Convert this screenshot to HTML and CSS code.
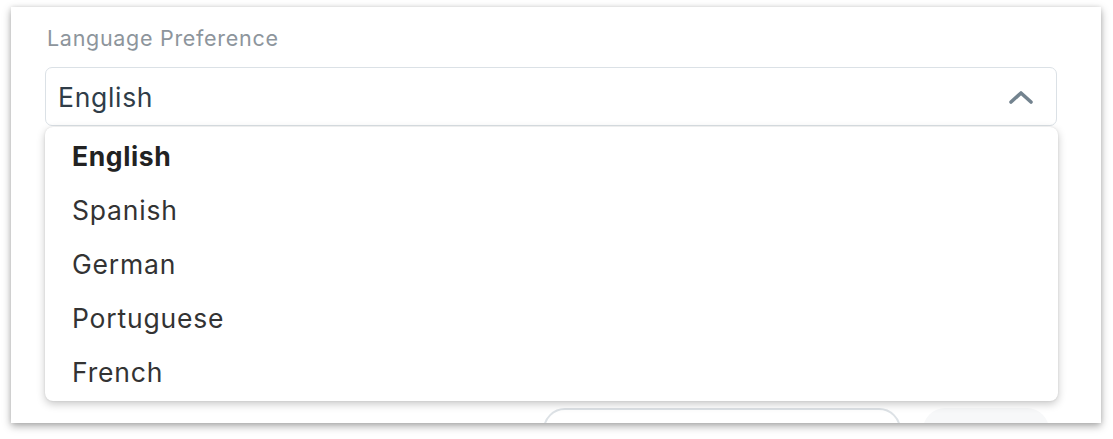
FILE: index.html
```html
<!DOCTYPE html>
<html>
<head>
<meta charset="utf-8">
<link rel="stylesheet" href="styles.css">
</head>
<body>
<div class="card">
  <div class="field">
    <div class="label">Language Preference</div>
    <div class="select-wrap">
      <div class="select">
        <span class="value">English</span>
        <svg class="chev" width="26" height="16" viewBox="0 0 26 16"><path d="M3 13 L13 4 L23 13" fill="none" stroke="#73838f" stroke-width="3.6" stroke-linecap="round" stroke-linejoin="round"/></svg>
      </div>
      <ul class="menu">
        <li class="item selected">English</li>
        <li class="item">Spanish</li>
        <li class="item">German</li>
        <li class="item">Portuguese</li>
        <li class="item">French</li>
      </ul>
    </div>
  </div>
  <div class="actions">
    <div class="btn outline"></div>
    <div class="btn ghost"></div>
  </div>
</div>
</body>
</html>
```
FILE: styles.css
```css
html, body { margin: 0; padding: 0; background: #fff; }
body { font-family: Inter, "Noto Sans", sans-serif; height: 439px; }
.card {
  margin: 7px 0 0 11px;
  width: 1090px;
  height: 416px;
  background: #fff;
  box-shadow: 0 3px 8px rgba(0,0,0,0.35), 0 0 4px rgba(0,0,0,0.08);
  overflow: hidden;
  padding: 0 44px 0 34px;
  box-sizing: border-box;
}
.field { padding-top: 17px; }
.label {
  font-size: 21.5px;
  letter-spacing: 0.7px;
  color: #8d959c;
  line-height: 28px;
  padding-left: 2px;
}
.select-wrap { position: relative; margin-top: 15px; }
.select {
  height: 59px;
  box-sizing: border-box;
  border: 1.5px solid #dbe1e6;
  border-radius: 7px;
  display: flex;
  align-items: center;
  justify-content: space-between;
  padding: 0 22px 0 12px;
}
.value { font-size: 26.5px; letter-spacing: 0.7px; color: #2f3d48; }
.chev { display: block; }
.menu {
  position: absolute;
  left: 0; right: -1px;
  top: 60px;
  margin: 0;
  padding: 2px 0 0;
  list-style: none;
  background: #fff;
  border-radius: 8px;
  box-shadow: 0 3px 8px rgba(0,0,0,0.22), 0 0 2px rgba(0,0,0,0.1);
  height: 274px;
  box-sizing: border-box;
  z-index: 2;
}
.item {
  height: 54px;
  display: flex;
  align-items: center;
  padding-left: 27px;
  font-size: 26.5px;
  letter-spacing: 0.8px;
  color: #333;
}
.item.selected { font-weight: 700; color: #222; letter-spacing: 0.6px; }
.actions {
  display: flex;
  gap: 22px;
  margin-top: 282px;
  padding-left: 498px;
}
.btn { height: 44px; border-radius: 22px; flex: none; }
.btn.outline { width: 358px; border: 2px solid #dde2e6; box-sizing: border-box; }
.btn.ghost { width: 126px; background: #f7f8f9; }
```
